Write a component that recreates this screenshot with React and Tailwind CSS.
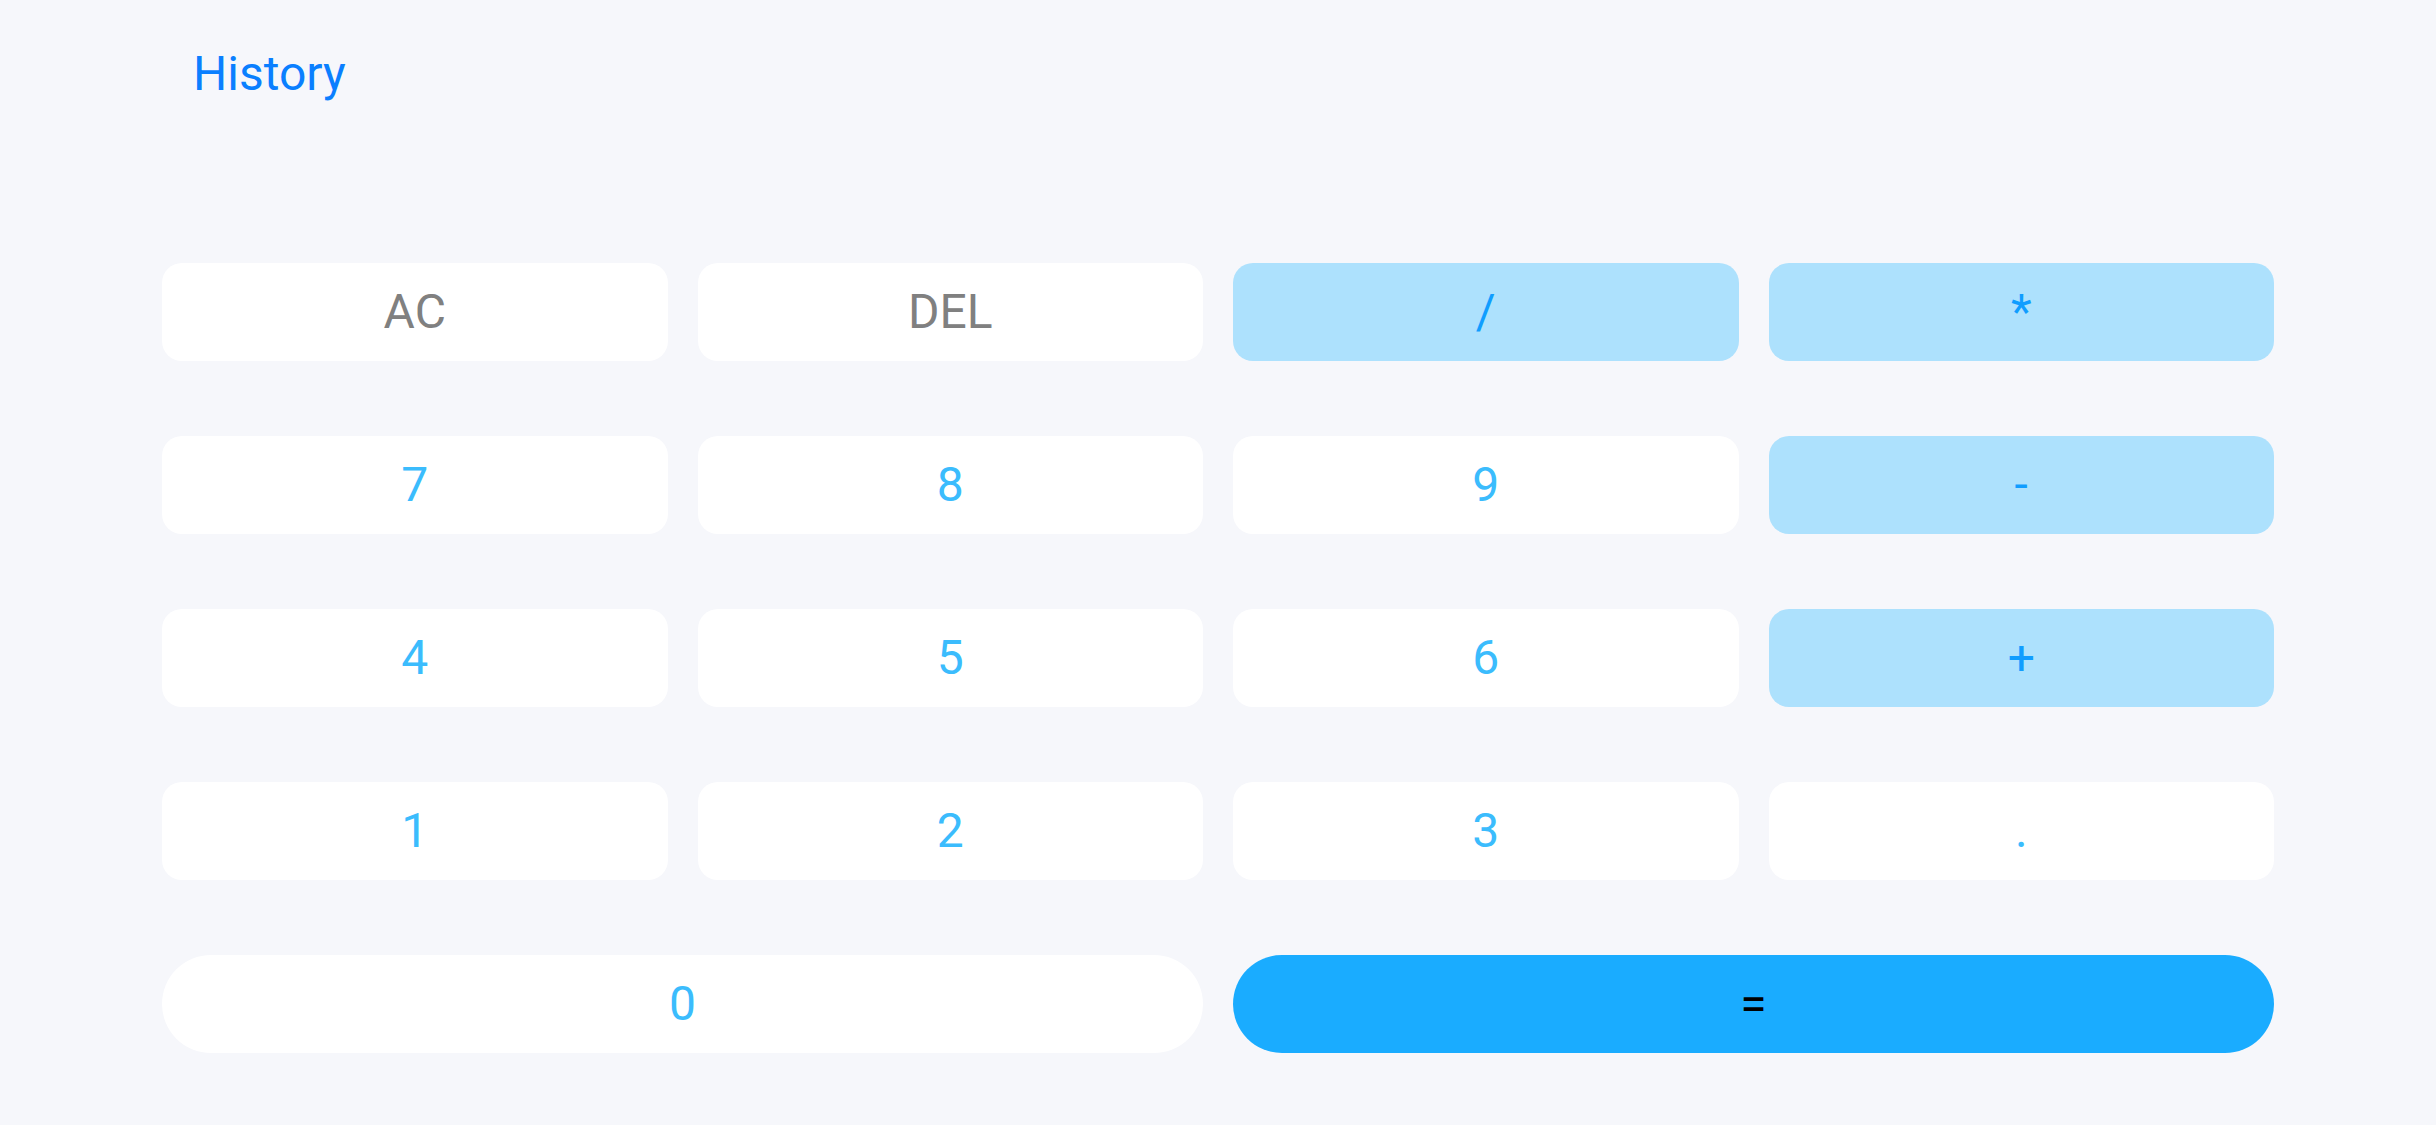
const keys = [
  { label: 'AC', kind: 'fn' },
  { label: 'DEL', kind: 'fn' },
  { label: '/', kind: 'op' },
  { label: '*', kind: 'op' },
  { label: '7' },
  { label: '8' },
  { label: '9' },
  { label: '-', kind: 'op' },
  { label: '4' },
  { label: '5' },
  { label: '6' },
  { label: '+', kind: 'op' },
  { label: '1' },
  { label: '2' },
  { label: '3' },
  { label: '.' },
]

const Key = ({ label, kind }) => {
  let cls = 'bg-white text-[#3bbcfd]'
  if (kind === 'fn') cls = 'bg-white text-[#808080]'
  if (kind === 'op') cls = 'bg-[#ade1fd] text-[#109dff]'
  return (
    <button className={`h-[98px] rounded-[20px] flex items-center justify-center text-[48px] leading-none ${cls}`}>
      {label}
    </button>
  )
}

const App = () => {
  return (
    <div
      className="min-h-screen w-full bg-[#f6f7fb] flex flex-col"
      style={{ fontFamily: 'Roboto, "Liberation Sans", sans-serif' }}
    >
      <div className="pt-[45px] pl-[193px]">
        <button className="text-[48px] leading-[58px] text-[#0a7fff]">History</button>
      </div>

      <div className="mt-[160px] px-[162px] grid grid-cols-4 gap-x-[30px] gap-y-[75px]">
        {keys.map((k) => (
          <Key key={k.label} {...k} />
        ))}
        <button className="col-span-2 h-[98px] rounded-full bg-white text-[#3bbcfd] text-[48px] leading-none flex items-center justify-center">
          0
        </button>
        <button className="col-span-2 h-[98px] rounded-full bg-[#1aacff] text-black text-[48px] leading-none flex items-center justify-center">
          =
        </button>
      </div>
    </div>
  )
}

export default App
